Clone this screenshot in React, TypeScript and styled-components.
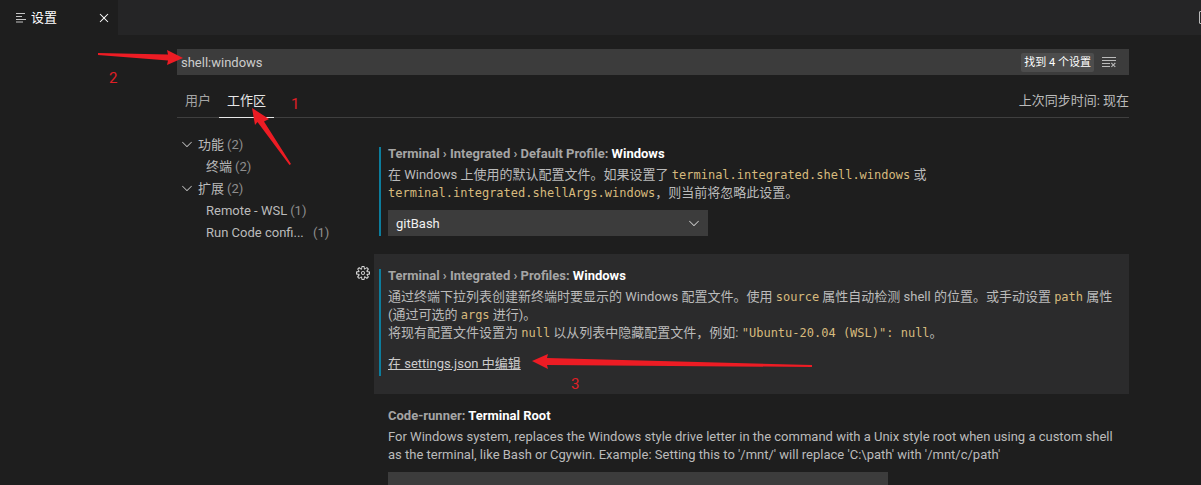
import React from "react";
import styled, { createGlobalStyle } from "styled-components";
import { VscChevronDown, VscClearAll, VscClose, VscGear, VscSplitHorizontal } from "react-icons/vsc";

const sans = `Roboto, "Noto Sans CJK SC", sans-serif`;
const mono = `"DejaVu Sans Mono", "Noto Sans CJK SC", monospace`;

const GlobalStyle = createGlobalStyle`
  * { box-sizing: border-box; }
  html { background: #1e1e1e; }
  body {
    margin: 0;
    overflow: hidden;
    font: 13px/18px ${sans};
    color: #bbbbbb;
  }
  button, input, select { font: inherit; color: inherit; }
`;

const Page = styled.div`
  position: relative;
  background: #1e1e1e;
`;

const TabBar = styled.header`
  display: flex;
  justify-content: space-between;
  height: 35px;
  overflow: hidden;
  background: #252526;
`;

const EditorTab = styled.div`
  display: flex;
  align-items: center;
  gap: 4px;
  width: 118px;
  padding: 0 6px 0 16px;
  background: #1e1e1e;
  color: #ffffff;
`;

const TabTitle = styled.span`
  flex: 1;
`;

const IconButton = styled.button`
  display: flex;
  flex: none;
  align-items: center;
  justify-content: center;
  padding: 0;
  border: 0;
  background: none;
  font-size: 16px;
`;

const EditorActions = styled.div`
  display: flex;
  align-items: center;
  width: 4px;
`;

const Editor = styled.main`
  padding: 14px 72px 0 177px;
`;

const SearchBox = styled.div`
  display: flex;
  align-items: center;
  height: 26px;
  padding-right: 12px;
  background: #3c3c3c;
`;

const SearchInput = styled.input`
  flex: 1;
  min-width: 0;
  padding: 2px 4px 0;
  border: 0;
  outline: 0;
  background: none;
  color: #cccccc;
`;

const ResultCount = styled.output`
  margin-right: 7px;
  padding: 1px 3px 0;
  border-radius: 2px;
  background: #4d4d4d;
  color: #ffffff;
  font-size: 11px;
  line-height: 18px;
`;

const ScopeBar = styled.div`
  display: flex;
  align-items: stretch;
  height: 43px;
  padding-top: 8px;
  border-bottom: 1px solid #3f3f3f;
`;

const ScopeTab = styled.button<{ $active?: boolean }>`
  margin-bottom: -1px;
  padding: 2px 8px 0;
  border: 0;
  border-bottom: 1px solid ${(p) => (p.$active ? "#e7e7e7" : "transparent")};
  background: none;
  color: ${(p) => (p.$active ? "#e7e7e7" : "#a5a5a5")};
`;

const SyncStatus = styled.span`
  margin-left: auto;
  padding-top: 2px;
  align-self: center;
`;

const Columns = styled.div`
  display: flex;
  padding-top: 14px;
`;

const Toc = styled.nav`
  flex: none;
  width: 178px;
  padding-top: 1px;
`;

const TocRow = styled.a<{ $child?: boolean }>`
  display: flex;
  align-items: center;
  gap: 3px;
  height: 22px;
  padding-left: ${(p) => (p.$child ? 29 : 2)}px;
  color: inherit;
  line-height: 20px;
  text-decoration: none;
  white-space: nowrap;

  svg { flex: none; }
  span { padding-top: 2px; }
`;

const TocLabel = styled.span<{ $clipped?: boolean }>`
  width: ${(p) => (p.$clipped ? "104px" : "auto")};
`;

const TocCount = styled.span`
  color: #8e8e8e;
`;

const SettingList = styled.div`
  flex: 1;
  min-width: 0;
`;

const SettingRow = styled.div`
  display: grid;
  grid-template-columns: 19px minmax(0, 1fr);
  align-items: start;
`;

const GearSlot = styled.div`
  padding-top: 11px;
  color: #d4d4d4;
`;

const SettingBody = styled.section<{ $focused?: boolean; $modified?: boolean }>`
  position: relative;
  padding: 13px 14px 18px;
  background: ${(p) => (p.$focused ? "#2b2b2c" : "transparent")};

  &::before {
    content: "";
    display: ${(p) => (p.$modified ? "block" : "none")};
    position: absolute;
    top: 15px;
    bottom: 18px;
    left: 5px;
    width: 2px;
    background: #0c7d9d;
  }
`;

const SettingTitle = styled.h3`
  margin: 0 0 3px;
  font-size: 13px;
  font-weight: 700;
  line-height: 18px;
  color: #a5a5a5;
  white-space: nowrap;

  strong { font-weight: 700; color: #ffffff; }
`;

const Description = styled.p`
  margin: 0;
  white-space: nowrap;

  code { font: 12px/16px ${mono}; color: #d7ba7d; }
`;

const SelectWrap = styled.div`
  display: grid;
  width: 320px;
  max-width: 100%;
  margin-top: 8px;
  align-items: center;

  select, svg { grid-area: 1 / 1; }
  svg { justify-self: end; margin-right: 6px; color: #cccccc; pointer-events: none; }
`;

const Select = styled.select`
  appearance: none;
  height: 26px;
  padding: 2px 8px 0;
  border: 0;
  border-radius: 0;
  background: #3c3c3c;
  color: #f0f0f0;
`;

const EditLink = styled.a`
  display: block;
  width: max-content;
  margin: 13px 0 3px;
  color: #cccccc;
  text-decoration: underline;
`;

const TextInput = styled.input`
  display: block;
  width: 500px;
  max-width: 100%;
  height: 26px;
  margin-top: 8px;
  border: 0;
  background: #3c3c3c;
`;

const Arrows = styled.svg`
  position: absolute;
  top: 0;
  left: 0;
  pointer-events: none;
`;

const StepNumber = styled.span<{ $x: number; $y: number }>`
  position: absolute;
  left: ${(p) => p.$x}px;
  top: ${(p) => p.$y}px;
  color: #e01f26;
  font-size: 15px;
  line-height: 18px;
`;

function SettingsFileIcon() {
  return (
    <svg width="11" height="12" viewBox="0 0 11 12" stroke="#c5c5c5" fill="none" aria-hidden="true">
      <path d="M0 1.5h9M0 4.500h6M0 7.500h10M0 10h7" />
    </svg>
  );
}

export default function App() {
  return (
    <Page>
      <GlobalStyle />
      <TabBar>
        <EditorTab>
          <SettingsFileIcon />
          <TabTitle>设置</TabTitle>
          <IconButton aria-label="关闭"><VscClose /></IconButton>
        </EditorTab>
        <EditorActions>
          <IconButton aria-label="拆分编辑器"><VscSplitHorizontal /></IconButton>
        </EditorActions>
      </TabBar>

      <Editor>
        <SearchBox>
          <SearchInput aria-label="搜索设置" defaultValue="shell:windows" />
          <ResultCount>找到 4 个设置</ResultCount>
          <IconButton aria-label="清除设置搜索输入"><VscClearAll /></IconButton>
        </SearchBox>
        <ScopeBar>
          <ScopeTab>用户</ScopeTab>
          <ScopeTab $active>工作区</ScopeTab>
          <SyncStatus>上次同步时间: 现在</SyncStatus>
        </ScopeBar>

        <Columns>
          <Toc>
            <TocRow href="#features">
              <VscChevronDown size={16} />
              <TocLabel>功能</TocLabel>
              <TocCount>(2)</TocCount>
            </TocRow>
            <TocRow href="#terminal" $child>
              <TocLabel>终端</TocLabel>
              <TocCount>(2)</TocCount>
            </TocRow>
            <TocRow href="#extensions">
              <VscChevronDown size={16} />
              <TocLabel>扩展</TocLabel>
              <TocCount>(2)</TocCount>
            </TocRow>
            <TocRow href="#remote-wsl" $child>
              <TocLabel>Remote - WSL</TocLabel>
              <TocCount>(1)</TocCount>
            </TocRow>
            <TocRow href="#run-code" $child>
              <TocLabel $clipped>Run Code confi...</TocLabel>
              <TocCount>(1)</TocCount>
            </TocRow>
          </Toc>

          <SettingList>
            <SettingRow>
              <GearSlot />
              <SettingBody $modified>
                <SettingTitle>
                  Terminal › Integrated › Default Profile: <strong>Windows</strong>
                </SettingTitle>
                <Description>
                  在 Windows 上使用的默认配置文件。如果设置了 <code>terminal.integrated.shell.windows</code> 或
                  <br />
                  <code>terminal.integrated.shellArgs.windows</code>，则当前将忽略此设置。
                </Description>
                <SelectWrap>
                  <Select aria-label="Default Profile: Windows" defaultValue="gitBash">
                    <option>gitBash</option>
                  </Select>
                  <VscChevronDown size={16} />
                </SelectWrap>
              </SettingBody>
            </SettingRow>

            <SettingRow>
              <GearSlot>
                <IconButton aria-label="更多操作"><VscGear /></IconButton>
              </GearSlot>
              <SettingBody $focused $modified>
                <SettingTitle>
                  Terminal › Integrated › Profiles: <strong>Windows</strong>
                </SettingTitle>
                <Description>
                  通过终端下拉列表创建新终端时要显示的 Windows 配置文件。使用 <code>source</code> 属性自动检测 shell 的位置。或手动设置 <code>path</code> 属性
                  <br />
                  (通过可选的 <code>args</code> 进行)。
                  <br />
                  将现有配置文件设置为 <code>null</code> 以从列表中隐藏配置文件，例如: <code>"Ubuntu-20.04 (WSL)": null</code>。
                </Description>
                <EditLink href="#settings-json">在 settings.json 中编辑</EditLink>
              </SettingBody>
            </SettingRow>

            <SettingRow>
              <GearSlot />
              <SettingBody>
                <SettingTitle>
                  Code-runner: <strong>Terminal Root</strong>
                </SettingTitle>
                <Description>
                  For Windows system, replaces the Windows style drive letter in the command with a Unix style root when using a custom shell
                  <br />
                  as the terminal, like Bash or Cgywin. Example: Setting this to '/mnt/' will replace 'C:\path' with '/mnt/c/path'
                </Description>
                <TextInput aria-label="Terminal Root" />
              </SettingBody>
            </SettingRow>
          </SettingList>
        </Columns>
      </Editor>

      <Arrows width="830" height="380" viewBox="0 0 830 380" fill="#ed1c24" aria-hidden="true">
        <path d="M98 53L168 54.500L167 50L183 58L167 65L168 60.500L98 55Z" />
        <path d="M252 108L269 119L264 121.500L291 164L289.500 165L257.500 122L255 125Z" />
        <path d="M532 361L548 354L547 358L812 365V367L547 365L548 369Z" />
      </Arrows>
      <StepNumber $x={291} $y={95}>1</StepNumber>
      <StepNumber $x={109} $y={69}>2</StepNumber>
      <StepNumber $x={571} $y={375}>3</StepNumber>
    </Page>
  );
}
